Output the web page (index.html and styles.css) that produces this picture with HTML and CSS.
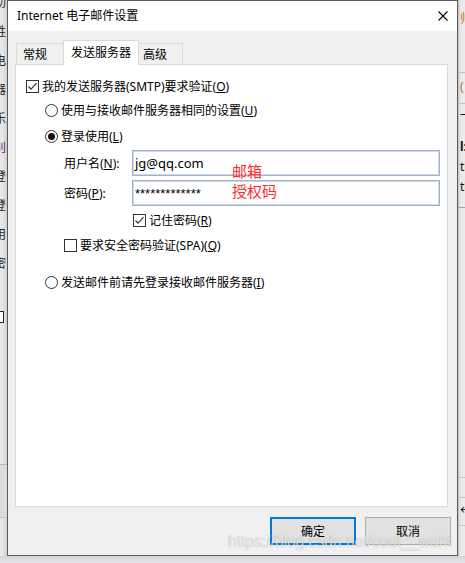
FILE: index.html
```html
<!DOCTYPE html>
<html lang="zh-CN">
<head>
<meta charset="utf-8">
<title>Internet 电子邮件设置</title>
<link rel="stylesheet" href="styles.css">
</head>
<body>
<div class="screen">
  <div class="side left">
    <div class="frags">
      <div>助</div><div>姓</div><div>电</div><div>器</div><div>乐</div><div class="purple">别</div><div>登</div><div>登</div><div>用</div><div>密</div>
    </div>
    <div class="lbox"></div>
    <div class="lrest"></div>
    <div class="lbottom"></div>
  </div>

  <div class="dialog">
    <div class="titlebar">
      <span class="title">Internet 电子邮件设置</span>
      <svg class="close" width="10" height="10" viewBox="0 0 10 10"><path d="M0.5 0.5 L9.5 9.5 M9.5 0.5 L0.5 9.5" stroke="#000" stroke-width="1.1" fill="none"/></svg>
    </div>
    <div class="client">
      <div class="tabs">
        <div class="tab t1">常规</div>
        <div class="tab active">发送服务器</div>
        <div class="tab t3">高级</div>
      </div>
      <div class="panel">
        <div class="row r1">
          <span class="check"><svg width="11" height="11" viewBox="0 0 11 11"><path d="M1.5 5.5 L4 8.2 L9.5 2.2" stroke="#333" stroke-width="1.2" fill="none"/></svg></span>
          <span>我的发送服务器(SMTP)要求验证(<u>O</u>)</span>
        </div>
        <div class="row r2">
          <span class="radio"></span>
          <span>使用与接收邮件服务器相同的设置(<u>U</u>)</span>
        </div>
        <div class="row r3">
          <span class="radio on"><span class="dot"></span></span>
          <span>登录使用(<u>L</u>)</span>
        </div>
        <div class="field f1">
          <span class="label">用户名(<u>N</u>):</span>
          <span class="input">jg@qq.com</span>
        </div>
        <div class="field f2">
          <span class="label">密码(<u>P</u>):</span>
          <span class="input stars">*************</span>
        </div>
        <div class="row r4">
          <span class="check"><svg width="11" height="11" viewBox="0 0 11 11"><path d="M1.5 5.5 L4 8.2 L9.5 2.2" stroke="#333" stroke-width="1.2" fill="none"/></svg></span>
          <span>记住密码(<u>R</u>)</span>
        </div>
        <div class="row r5">
          <span class="check"></span>
          <span>要求安全密码验证(SPA)(<u>Q</u>)</span>
        </div>
        <div class="row r6">
          <span class="radio"></span>
          <span>发送邮件前请先登录接收邮件服务器(<u>I</u>)</span>
        </div>
        <div class="note">邮箱<br>授权码</div>
      </div>
      <div class="buttons">
        <button class="btn primary">确定</button>
        <button class="btn">取消</button>
      </div>
    </div>
  </div>

  <div class="side right">
    <div class="rs rs1"><span class="rfrag orange">帅</span></div>
    <div class="rs rs2"><span class="rfrag yellow">(</span></div>
    <div class="rs rs3">
      <div class="rline">一</div>
      <div class="rline b">l:</div>
      <div class="rline">tle</div>
      <div class="rline">tle</div>
    </div>
    <div class="rs rs4"></div>
    <div class="rs rs5"></div>
    <div class="rs rs6"><span class="rfrag">←</span></div>
    <div class="rs rs7"></div>
  </div>
</div>
<div class="bottomstrip"></div>
<div class="watermark">https://blog.csdn.net/cout__waht</div>
</body>
</html>
```

FILE: styles.css
```css
* { box-sizing: border-box; }
html, body { margin: 0; padding: 0; }
body {
  width: 465px;
  height: 563px;
  overflow: hidden;
  position: relative;
  background: #e4e5ea;
  font-family: "Noto Sans", "Noto Sans CJK SC", sans-serif;
  font-size: 12px;
  color: #000;
}
u { text-decoration: underline; text-underline-offset: 1px; }

.screen { display: flex; height: 556px; }

/* side strips (background window) */
.side { width: 7px; flex: none; overflow: hidden; position: relative; }
.side.left {
  background: linear-gradient(to right, #e9e9e9 0, #e2e2e2 4px, #cfcfcf 7px);
  display: flex; flex-direction: column;
}
.frags { margin-left: -6px; margin-top: -12px; line-height: 29px; font-size: 12px; color: #222; height: 320px; }
.frags .purple { color: #6a2a6a; }
.lbox { height: 12px; width: 4px; border: 1px solid #222; border-left: none; margin-left: 0; margin-top: 3px; background: #fff; }
.lrest { height: 142px; border-bottom: 1px solid #b8b8b8; }
.lbottom { flex: 1; background: #dcdcdc; border-bottom: 1px solid #c8c8c8; max-height: 53px; }

.side.right {
  background: linear-gradient(to right, #bdbdbd 0, #e6e6e6 2px, #ececec 7px);
  display: flex; flex-direction: column;
}
.rs { flex: none; border-bottom: 1px solid #c4c4c4; padding-left: 2px; font-size: 12px; line-height: 14px; }
.rs1 { height: 73px; padding-top: 12px; }
.rs2 { height: 31px; padding-top: 7px; }
.rs3 { height: 104px; border-bottom-color: #98a8c0; }
.rs4 { height: 270px; }
.rs5 { height: 20px; }
.rs6 { height: 28px; padding-top: 6px; }
.rs7 { flex: 1; border-bottom: none; }
.rfrag { display: block; }
.orange { color: #c07020; }
.yellow { color: #9a7a10; }
.rline { height: 20px; line-height: 20px; color: #111; }
.rline:first-child { margin-top: 2px; }
.rline.b { font-weight: bold; margin-top: 11px; }

/* dialog */
.dialog {
  width: 451px;
  height: 556px;
  flex: none;
  border: 1px solid #5a5a5a;
  background: #f0f0f0;
  display: flex;
  flex-direction: column;
}
.titlebar {
  height: 30px;
  flex: none;
  background: #fff;
  display: flex;
  align-items: center;
  justify-content: space-between;
  padding: 0 9px 0 9px;
}
.title { font-size: 12px; line-height: 16px; }
.close { display: block; }

.client {
  flex: 1;
  display: flex;
  flex-direction: column;
  padding: 9px 9px 0 7px;
}
.tabs {
  height: 24px;
  display: flex;
  align-items: flex-end;
  padding-left: 1px;
  position: relative;
  z-index: 1;
}
.tab {
  height: 21px;
  background: #f0f0f0;
  border-top: 1px solid #d9d9d9;
  display: flex;
  align-items: center;
  white-space: nowrap;
}
.tab.t1 { width: 47px; border-left: 1px solid #d9d9d9; padding-left: 6px; }
.tab.t3 { width: 44px; border-right: 1px solid #d9d9d9; padding-left: 4px; }
.tab.active {
  width: 76px;
  height: 25px;
  margin-bottom: -1px;
  background: #fff;
  border-left: 1px solid #d9d9d9;
  border-right: 1px solid #d9d9d9;
  padding-left: 7px;
  padding-bottom: 2px;
}

.panel {
  height: 443px;
  flex: none;
  background: #fff;
  border: 1px solid #d9d9d9;
  position: relative;
  padding: 11px 0 0 10px;
}
.row { display: flex; align-items: center; height: 20px; white-space: nowrap; }
.check {
  width: 13px; height: 13px;
  flex: none;
  border: 1px solid #333;
  background: #fff;
  margin-right: 3px;
  display: flex; align-items: center; justify-content: center;
}
.check svg { display: block; }
.radio {
  width: 13px; height: 13px;
  flex: none;
  border: 1px solid #333;
  border-radius: 50%;
  background: #fff;
  margin-right: 3px;
  display: flex; align-items: center; justify-content: center;
}
.radio .dot { width: 7px; height: 7px; border-radius: 50%; background: #111; }
.r2 { margin-top: 4px; padding-left: 19px; }
.r3 { margin-top: 6px; padding-left: 19px; }
.r4 { margin-top: 4px; padding-left: 107px; }
.r5 { margin-top: 5px; padding-left: 38px; }
.r6 { margin-top: 17px; padding-left: 19px; }

.field { display: flex; align-items: center; height: 26px; padding-left: 38px; }
.f1 { margin-top: 4px; }
.f2 { margin-top: 4px; }
.label { width: 68px; flex: none; white-space: nowrap; }
.input {
  width: 308px;
  height: 26px;
  border: 1px solid #a9b2c0;
  box-shadow: inset 0 0 0 1px #c8d8ec;
  background: #fff;
  display: flex;
  align-items: center;
  padding-left: 2px;
  font-size: 13px;
}
.input.stars {
  font-family: "Liberation Sans", sans-serif;
  font-size: 13px;
  align-items: flex-start;
  padding-top: 5px;
}

.note {
  position: absolute;
  left: 216px;
  top: 96px;
  color: #ff2a2a;
  font-family: "Noto Sans CJK SC", sans-serif;
  font-size: 15px;
  line-height: 20px;
}

.buttons {
  display: flex;
  justify-content: flex-end;
  gap: 9px;
  padding-top: 10px;
  margin-right: -3px;
}
.btn {
  width: 86px;
  height: 28px;
  background: #e1e1e1;
  border: 1px solid #adadad;
  font-family: "Noto Sans", "Noto Sans CJK SC", sans-serif;
  font-size: 12px;
  color: #000;
  padding: 0;
  margin: 0;
}
.btn.primary { border: 2px solid #0078d7; }

.bottomstrip {
  height: 7px;
  background: linear-gradient(to bottom, #d4d5da, #e6e7ec);
}

.watermark {
  position: absolute;
  left: 228px;
  top: 533px;
  font-family: "Liberation Sans", sans-serif;
  font-size: 15.6px;
  color: rgba(255, 255, 255, 0.72);
  text-shadow: 0 0 1px rgba(0, 0, 0, 0.35);
  white-space: nowrap;
}
```
